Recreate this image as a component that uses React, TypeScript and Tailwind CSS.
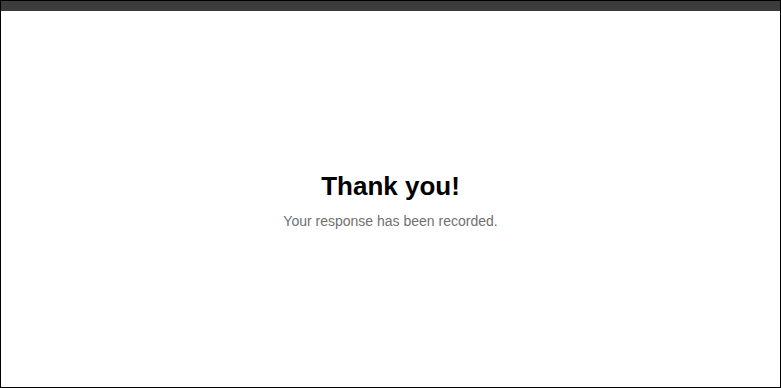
export default function App() {
  return (
    <div className="w-[781px] h-[388px] border border-black bg-white flex flex-col" style={{ fontFamily: '"Liberation Sans", Arial, sans-serif' }}>
      <div className="h-[10px] bg-[#3c3c3c] shrink-0" />
      <div className="flex-1 flex flex-col items-center justify-center pt-[2px]">
        <h1 className="text-[26px] font-bold text-black leading-[30px]">Thank you!</h1>
        <p className="mt-[11px] text-[14px] text-[#707070] leading-[18px]">Your response has been recorded.</p>
      </div>
    </div>
  );
}
